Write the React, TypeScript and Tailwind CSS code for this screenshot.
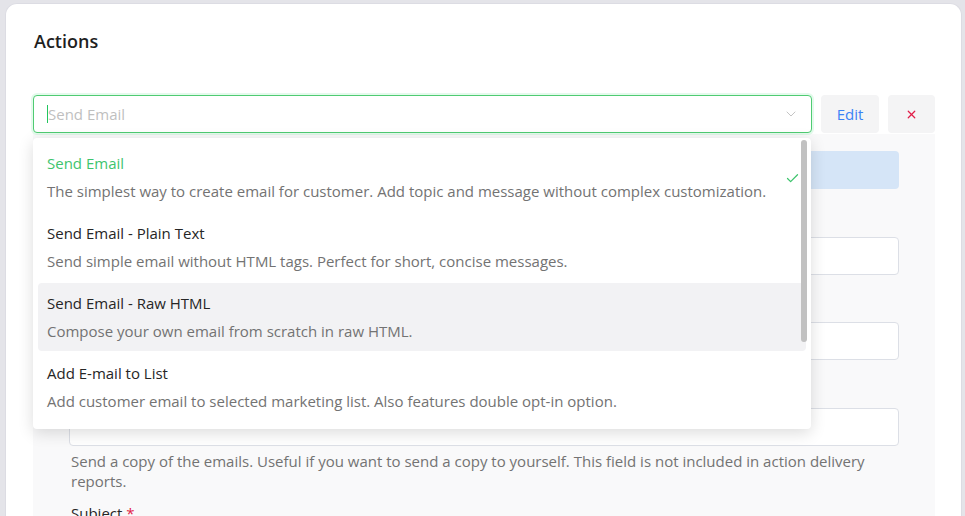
import React from 'react';
import { Check, ChevronDown, X } from 'lucide-react';

const options = [
  {
    title: 'Send Email',
    desc: 'The simplest way to create email for customer. Add topic and message without complex customization.',
    selected: true,
  },
  {
    title: 'Send Email - Plain Text',
    desc: 'Send simple email without HTML tags. Perfect for short, concise messages.',
  },
  {
    title: 'Send Email - Raw HTML',
    desc: 'Compose your own email from scratch in raw HTML.',
    hover: true,
  },
  {
    title: 'Add E-mail to List',
    desc: 'Add customer email to selected marketing list. Also features double opt-in option.',
  },
];

const App: React.FC = () => {
  return (
    <div
      className="min-h-screen bg-[#e4e4e9] pt-[3px] pl-[5px] pr-[3px]"
      style={{ fontFamily: '"Open Sans", "Noto Sans", sans-serif' }}
    >
      <div className="h-[513px] overflow-hidden rounded-t-xl border border-b-0 border-[#dcdce3] bg-white pl-[28px] pr-[26px] pt-[25px]">
        <h2 className="text-[18px] font-semibold leading-[24px] text-[#1f1f1f]">Actions</h2>

        <div className="relative -ml-px mt-[42px] flex h-[38px] gap-[9px]">
          {/* select */}
          <div className="flex flex-1 items-center rounded border border-[#4fcb72] bg-white pl-[13px] pr-[12px] shadow-[0_0_0_2px_rgba(74,222,128,0.15)]">
            <span className="h-[18px] w-px bg-[#22c55e]" />
            <span className="flex-1 text-[15px] text-[#bfbfbf]">Send Email</span>
            <ChevronDown className="h-4 w-4 text-[#c4c4c4]" strokeWidth={1.5} />
          </div>
          <button className="w-[58px] rounded bg-[#f4f4f5] text-[15px] text-[#3b82f6]">Edit</button>
          <button className="flex w-[47px] items-center justify-center rounded bg-[#f4f4f5] text-[#e11d48]">
            <X className="h-[13px] w-[13px]" strokeWidth={2.25} />
          </button>

          {/* dropdown menu */}
          <div className="absolute left-0 top-[43px] z-10 h-[291px] w-[778px] overflow-hidden rounded bg-white px-[5px] pt-[5px] shadow-[0_4px_16px_rgba(0,0,0,0.14)]">
            <div className="flex flex-col gap-[2px]">
              {options.map((o) => (
                <div
                  key={o.title}
                  className={`relative flex h-[68px] flex-col justify-center rounded px-[9px] ${o.hover ? 'bg-[#f2f2f4]' : ''}`}
                >
                  <div className={`text-[15px] leading-[28px] ${o.selected ? 'text-[#3ec46d]' : 'text-[#262626]'}`}>
                    {o.title}
                  </div>
                  <div className="text-[15px] leading-[28px] text-[#737373]">{o.desc}</div>
                  {o.selected && (
                    <Check className="absolute right-[6px] top-[28px] h-[15px] w-[15px] text-[#3ec46d]" strokeWidth={2} />
                  )}
                </div>
              ))}
            </div>
            <div className="absolute right-[4px] top-[2px] h-[202px] w-[6px] rounded-full bg-[#c1c1c1]" />
          </div>
        </div>

        {/* action form (mostly under the menu) */}
        <div className="-ml-px mt-px h-[400px] bg-[#f9f9fa] pl-[36px] pr-[36px] pt-[17px] text-[15px]">
          <div className="h-[38px] rounded bg-[#d5e5f7]" />
          <div className="h-[48px]" />
          <div className="h-[38px] rounded border border-[#dcdfe6] bg-white" />
          <div className="h-[47px]" />
          <div className="h-[38px] rounded border border-[#dcdfe6] bg-white" />
          <div className="h-[48px]" />
          <div className="h-[38px] rounded border border-[#dcdfe6] bg-white" />
          <p className="mt-[5px] pl-[2px] leading-[20px] text-[#737373]">
            Send a copy of the emails. Useful if you want to send a copy to yourself. This field is not included in action delivery
            reports.
          </p>
          <div className="mt-[12px] pl-[2px] leading-[20px] text-[#262626]">
            Subject <span className="text-[#e11d48]">*</span>
          </div>
        </div>
      </div>
    </div>
  );
};

export default App;
